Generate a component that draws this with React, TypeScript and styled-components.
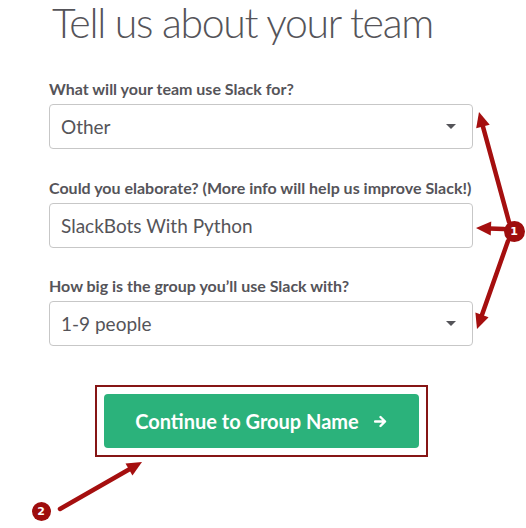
import React from 'react';
import styled, { createGlobalStyle } from 'styled-components';

const GlobalStyle = createGlobalStyle`
  html, body { margin: 0; padding: 0; background: #fff; }
  body { font-family: Lato, "Noto Sans", sans-serif; color: #555459; }
`;

const Page = styled.div`
  position: relative;
  width: 526px;
  height: 528px;
  overflow: hidden;
  background: #fff;
`;

const Form = styled.div`
  width: 424px;
  padding-left: 49px;
  display: flex;
  flex-direction: column;
`;

const Title = styled.h1`
  margin: 0 0 33px 3px;
  font-size: 41px;
  line-height: 46px;
  font-weight: 300;
  color: #555459;
  white-space: nowrap;
  letter-spacing: -1.3px;
`;

const Field = styled.div<{ $gap?: number }>`
  display: flex;
  flex-direction: column;
  margin-top: ${p => p.$gap ?? 0}px;
`;

const Label = styled.label`
  font-size: 16px;
  line-height: 20px;
  font-weight: 700;
  color: #555459;
  margin-bottom: 5px;
  white-space: nowrap;
`;

const Box = styled.div`
  box-sizing: border-box;
  height: 45px;
  border: 1px solid #c7c7c7;
  border-radius: 4px;
  display: flex;
  align-items: center;
  justify-content: space-between;
  padding: 0 16px 0 11px;
  font-size: 19px;
  color: #555459;
  background: #fff;
`;

const Caret = styled.span`
  width: 0;
  height: 0;
  border-left: 5px solid transparent;
  border-right: 5px solid transparent;
  border-top: 5px solid #555459;
`;

const Actions = styled.div`
  display: flex;
  justify-content: center;
  margin-top: 39px;
`;

const Highlight = styled.div`
  border: 2px solid #861515;
  padding: 7px;
`;

const Button = styled.button`
  width: 315px;
  height: 54px;
  border: none;
  border-radius: 4px;
  background: #2bb27b;
  color: #fff;
  font-family: Lato, "Noto Sans", sans-serif;
  font-weight: 700;
  font-size: 20px;
  display: flex;
  align-items: center;
  justify-content: center;
  gap: 15px;
  padding: 0;
`;

const Overlay = styled.svg`
  position: absolute;
  left: 0;
  top: 0;
  pointer-events: none;
`;

const Badge = styled.div<{ $size: number }>`
  position: absolute;
  width: ${p => p.$size}px;
  height: ${p => p.$size}px;
  margin: ${p => -p.$size / 2}px 0 0 ${p => -p.$size / 2}px;
  border-radius: 50%;
  background: #9e0d0d;
  color: #fff;
  font-family: "DejaVu Sans", sans-serif;
  font-weight: 700;
  font-size: 11px;
  display: flex;
  align-items: center;
  justify-content: center;
`;

const RED = '#a50f0f';

function Arrow({ x1, y1, x2, y2 }: { x1: number; y1: number; x2: number; y2: number }) {
  const dx = x2 - x1;
  const dy = y2 - y1;
  const len = Math.hypot(dx, dy);
  const ux = dx / len;
  const uy = dy / len;
  const head = 15;
  const half = 7;
  const bx = x2 - ux * head;
  const by = y2 - uy * head;
  const pts = `${x2},${y2} ${bx - uy * half},${by + ux * half} ${bx + uy * half},${by - ux * half}`;
  return (
    <g>
      <line x1={x1} y1={y1} x2={bx + ux * 2} y2={by + uy * 2} stroke={RED} strokeWidth={4.5} strokeLinecap="round" />
      <polygon points={pts} fill={RED} />
    </g>
  );
}

const NextIcon = () => (
  <svg width="13" height="13" viewBox="0 0 13 13">
    <path d="M1 6.5h10M6.5 2l4.5 4.5L6.5 11" fill="none" stroke="#fff" strokeWidth="2.4" strokeLinecap="round" strokeLinejoin="round" />
  </svg>
);

export default function App() {
  return (
    <Page>
      <GlobalStyle />
      <Form>
        <Title>Tell us about your team</Title>
        <Field>
          <Label>What will your team use Slack for?</Label>
          <Box>
            Other
            <Caret />
          </Box>
        </Field>
        <Field $gap={29}>
          <Label>Could you elaborate? (More info will help us improve Slack!)</Label>
          <Box>SlackBots With Python</Box>
        </Field>
        <Field $gap={28}>
          <Label>How big is the group you’ll use Slack with?</Label>
          <Box>
            1-9 people
            <Caret />
          </Box>
        </Field>
        <Actions>
          <Highlight>
            <Button>
              Continue to Group Name
              <NextIcon />
            </Button>
          </Highlight>
        </Actions>
      </Form>
      <Overlay width={526} height={528}>
        <Arrow x1={509} y1={222} x2={479} y2={112} />
        <Arrow x1={504} y1={229} x2={476} y2={228} />
        <Arrow x1={508} y1={241} x2={477} y2={329} />
        <Arrow x1={60} y1={509} x2={142} y2={462} />
      </Overlay>
      <Badge $size={21} style={{ left: 514, top: 231 }}>1</Badge>
      <Badge $size={19} style={{ left: 41, top: 511 }}>2</Badge>
    </Page>
  );
}
